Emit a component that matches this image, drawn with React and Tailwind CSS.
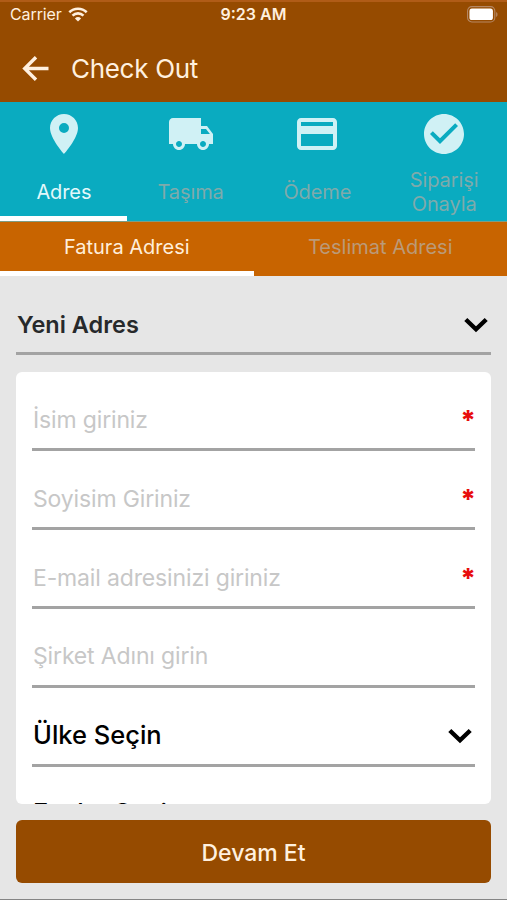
import React, { useState } from "react";
import {
  MdCheckCircle,
  MdLocalShipping,
  MdPayment,
  MdPlace,
} from "react-icons/md";

const steps = [
  { label: "Adres", icon: MdPlace },
  { label: "Taşıma", icon: MdLocalShipping },
  { label: "Ödeme", icon: MdPayment },
  { label: "Siparişi Onayla", icon: MdCheckCircle },
];

const addressTabs = ["Fatura Adresi", "Teslimat Adresi"];

const fields = [
  { name: "firstName", placeholder: "İsim giriniz", required: true },
  { name: "lastName", placeholder: "Soyisim Giriniz", required: true },
  { name: "email", placeholder: "E-mail adresinizi giriniz", required: true },
  { name: "company", placeholder: "Şirket Adını girin", required: false },
];

const StatusBar = () => (
  <div className="grid h-[30px] grid-cols-3 items-center border-t-2 border-[#b05c17] px-[10px] pb-[4px] text-[#fff0df]">
    <div className="flex items-center gap-[6px]">
      <span className="text-[16px] tracking-[-0.1px]">Carrier</span>
      <svg className="h-[15px] w-[20px]" viewBox="0 0 20 15" fill="none">
        <path d="M1.3 5.2a12.6 12.6 0 0 1 17.4 0" stroke="currentColor" strokeWidth="2.6" />
        <path d="M4.5 8.6a8 8 0 0 1 11 0" stroke="currentColor" strokeWidth="2.6" />
        <path d="M10 14.6 6.9 11.4a4.6 4.6 0 0 1 6.2 0z" fill="currentColor" />
      </svg>
    </div>
    <span className="text-center text-[16px] font-semibold">9:23 AM</span>
    <svg className="-mr-[1px] h-[17px] w-[31px] justify-self-end" viewBox="0 0 33 17" preserveAspectRatio="none">
      <rect x="0.6" y="0.6" width="29" height="15.4" rx="4.5" fill="none" stroke="#b58763" strokeWidth="1.2" />
      <rect x="2.6" y="2.6" width="25" height="11.4" rx="2.6" fill="#fff" />
      <path d="M31 6v5c2-.8 2-4.2 0-5z" fill="#b58763" />
    </svg>
  </div>
);

const SelectRow = ({ label, className }) => (
  <button
    type="button"
    className={`flex w-full items-center justify-between border-b-[3px] border-[#a3a3a3] pl-px text-left ${className}`}
  >
    <span>{label}</span>
    <svg className="mr-[2px] h-[16px] w-[26px] shrink-0" viewBox="0 0 26 16" fill="none">
      <path d="M2.8 2.5 13 12.3 23.2 2.5" stroke="#000" strokeWidth="4.4" />
    </svg>
  </button>
);

const App = () => {
  const [activeStep] = useState(0);
  const [activeTab, setActiveTab] = useState(0);

  return (
    <div className="flex h-[900px] w-[507px] flex-col overflow-hidden border-b border-[#858585] bg-[#e6e6e6] font-['Inter',sans-serif]">
      <header className="h-[102px] shrink-0 bg-[#964b00]">
        <StatusBar />
        <div className="flex h-[76px] items-center pl-[22px] text-[#fff0df]">
          <svg className="size-[27px]" viewBox="0 0 27 27" fill="none">
            <path d="M26.5 13.5H3.5M14 2.2 2.7 13.5 14 24.8" stroke="currentColor" strokeWidth="3.4" />
          </svg>
          <h1 className="ml-[22px] text-[26px] tracking-[-0.3px]">Check Out</h1>
        </div>
      </header>

      {/* Checkout steps */}
      <nav className="grid h-[120px] shrink-0 grid-cols-4 border-b border-[#7f9c82] bg-[#0aabc0]">
        {steps.map((step, index) => (
          <div
            key={step.label}
            className={`flex flex-col items-center border-b-[5px] pt-2 pl-px ${
              index === activeStep
                ? "border-white text-[#e2f8fb]"
                : "border-transparent text-[#7faaab]"
            }`}
          >
            <step.icon className="size-[48px] shrink-0 text-[#d0f1f5]" />
            <div className="flex h-[58px] w-[90px] shrink-0 items-center justify-center pt-[9px] text-center text-[20px] leading-[24px] tracking-[-0.1px]">
              {step.label}
            </div>
          </div>
        ))}
      </nav>

      {/* Billing / shipping tabs */}
      <div className="grid h-[54px] shrink-0 grid-cols-2 bg-[#c86400]">
        {addressTabs.map((tab, index) => (
          <button
            key={tab}
            type="button"
            onClick={() => setActiveTab(index)}
            className={`border-b-[5px] text-[20px] ${
              index === activeTab
                ? "border-white text-[#ffeeda]"
                : "border-transparent text-[#bb9a78]"
            }`}
          >
            {tab}
          </button>
        ))}
      </div>

      <main className="flex min-h-0 flex-1 flex-col px-4 pt-[22px] pb-[15px]">
        <SelectRow
          label="Yeni Adres"
          className="h-[57px] shrink-0 text-[23.5px] font-semibold text-[#27292b]"
        />

        <div className="mt-[17px] h-[432px] shrink-0 overflow-hidden rounded-md bg-white px-4">
          {fields.map((field) => (
            <div
              key={field.name}
              className={`flex h-[79px] items-end justify-between border-b-[3px] border-[#a3a3a3] pl-px ${
                field.required ? "pb-[13px]" : "pb-[14px]"
              }`}
            >
              <input
                name={field.name}
                placeholder={field.placeholder}
                className="h-[30px] min-w-0 flex-1 text-[23px] tracking-[-0.15px] outline-none placeholder:text-[#c7c7c7]"
              />
              {field.required && (
                <span className="-mr-px h-[30px] text-[27px] leading-[31px] font-extrabold text-[#e80d0d]">
                  *
                </span>
              )}
            </div>
          ))}
          <SelectRow
            label="Ülke Seçin"
            className="h-[79px] pt-[19px] text-[25.5px] font-medium text-black"
          />
          <SelectRow
            label="Eyalet Seçin"
            className="h-[79px] pt-[17px] text-[25.5px] font-medium text-black"
          />
        </div>

        <button
          type="button"
          className="mt-4 h-[63px] shrink-0 rounded-md bg-[#964b00] pt-[3px] text-[23px] font-medium text-[#fff0df]"
        >
          Devam Et
        </button>
      </main>
    </div>
  );
};

export default App;
